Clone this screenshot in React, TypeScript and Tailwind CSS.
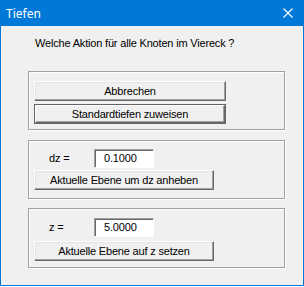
import React from "react";

const font = { fontFamily: '"Liberation Sans", Arial, sans-serif', letterSpacing: "-0.18px" };

function Btn({ label, w, isDefault }: { label: string; w: string; isDefault?: boolean }) {
  if (isDefault) {
    return (
      <div className={`${w} h-[20px] border border-[#646464] bg-[#f0f0f0]`}>
        <div className="w-full h-full flex items-center justify-center text-[11px] text-black leading-none border-t border-l border-t-white border-l-white border-b border-r border-b-[#696969] border-r-[#696969] shadow-[inset_-1px_-1px_0_#a0a0a0]">
          {label}
        </div>
      </div>
    );
  }
  return (
    <div className={`${w} h-[20px] flex items-center justify-center text-[11px] text-black leading-none bg-[#f0f0f0] border-t border-l border-t-white border-l-white border-b border-r border-b-[#696969] border-r-[#696969] shadow-[inset_-1px_-1px_0_#a0a0a0,inset_1px_1px_0_#e3e3e3]`}>
      {label}
    </div>
  );
}

function Group({ children }: { children: React.ReactNode }) {
  return (
    <div className="w-[257px] h-[59px] border border-[#a0a0a0] shadow-[inset_1px_1px_0_#ffffff,1px_1px_0_#ffffff] pt-[9px] pl-[5px] flex flex-col">
      {children}
    </div>
  );
}

function Field({ label, value }: { label: string; value: string }) {
  return (
    <div className="flex items-center h-[19px]">
      <div className="w-[60px] pl-[15px] text-[11px] text-black leading-none">{label}</div>
      <div className="w-[60px] h-[19px] bg-white border-t border-l border-t-[#a0a0a0] border-l-[#a0a0a0] border-b border-r border-b-white border-r-white shadow-[inset_1px_1px_0_#696969] flex items-center pl-[9px] text-[11px] text-black leading-none">
        {value}
      </div>
    </div>
  );
}

export default function App() {
  return (
    <div className="w-[304px] h-[287px] bg-white" style={font}>
      <div className="w-[304px] h-[286px] flex flex-col">
        <div className="h-[26px] bg-[#0078d7] flex items-center justify-between pl-[6px] pr-[11px] shrink-0">
          <span className="text-white text-[12px] leading-none pt-[1px] tracking-normal" style={{ fontFamily: '"Noto Sans", "Open Sans", sans-serif' }}>
            Tiefen
          </span>
          <svg width="10" height="10" viewBox="0 0 10 10">
            <path d="M0.5 0.5 L9.5 9.5 M9.5 0.5 L0.5 9.5" stroke="#ffffff" strokeWidth="1.1" />
          </svg>
        </div>
        <div className="flex-1 bg-[#f0f0f0] border-x border-b border-[#0078d7] flex flex-col pl-[27px]">
          <div className="pt-[11px] pl-[7px] text-[11px] leading-[13px] text-black">
            Welche Aktion für alle Knoten im Viereck ?
          </div>
          <div className="mt-[21px]">
            <Group>
              <Btn label="Abbrechen" w="w-[192px]" />
              <div className="mt-[3px]">
                <Btn label="Standardtiefen zuweisen" w="w-[192px]" isDefault />
              </div>
            </Group>
          </div>
          <div className="mt-[10px]">
            <Group>
              <div className="-mt-[1px]">
                <Field label="dz =" value="0.1000" />
              </div>
              <div className="mt-[2px]">
                <Btn label="Aktuelle Ebene um dz anheben" w="w-[180px]" />
              </div>
            </Group>
          </div>
          <div className="mt-[9px]">
            <div className="w-[257px] h-[60px] border border-[#a0a0a0] shadow-[inset_1px_1px_0_#ffffff,1px_1px_0_#ffffff] pt-[9px] pl-[5px] flex flex-col">
              <Field label="z =" value="5.0000" />
              <div className="mt-[4px]">
                <Btn label="Aktuelle Ebene auf z setzen" w="w-[180px]" />
              </div>
            </div>
          </div>
        </div>
      </div>
    </div>
  );
}
